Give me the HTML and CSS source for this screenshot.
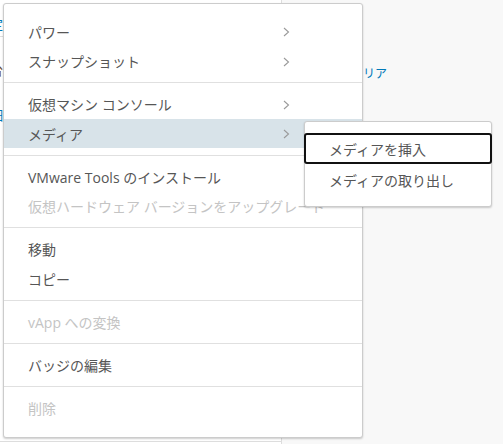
FILE: index.html
```html
<!DOCTYPE html>
<html lang="ja">
<head>
<meta charset="utf-8">
<link rel="stylesheet" href="styles.css">
</head>
<body>
<div class="page">
  <div class="left-panel">
    <div class="frag frag-1">設定</div>
    <div class="frag-line"></div>
    <div class="frag frag-2">台</div>
    <div class="frag frag-3">詳細</div>
    <div class="bottom-row"></div>
  </div>
  <div class="right-panel">
    <div class="link-text">リア</div>
  </div>
</div>

<div class="menu">
  <div class="item"><span class="label">パワー</span><svg class="chev" width="7" height="10" viewBox="0 0 7 10"><polyline points="1,1 5.5,5 1,9" /></svg></div>
  <div class="item"><span class="label">スナップショット</span><svg class="chev" width="7" height="10" viewBox="0 0 7 10"><polyline points="1,1 5.5,5 1,9" /></svg></div>
  <div class="divider"></div>
  <div class="item"><span class="label">仮想マシン コンソール</span><svg class="chev" width="7" height="10" viewBox="0 0 7 10"><polyline points="1,1 5.5,5 1,9" /></svg></div>
  <div class="item active"><span class="label">メディア</span><svg class="chev" width="7" height="10" viewBox="0 0 7 10"><polyline points="1,1 5.5,5 1,9" /></svg></div>
  <div class="divider"></div>
  <div class="item"><span class="label">VMware Tools のインストール</span></div>
  <div class="item disabled"><span class="label">仮想ハードウェア バージョンをアップグレード</span></div>
  <div class="divider"></div>
  <div class="item"><span class="label">移動</span></div>
  <div class="item"><span class="label">コピー</span></div>
  <div class="divider"></div>
  <div class="item disabled"><span class="label">vApp への変換</span></div>
  <div class="divider"></div>
  <div class="item"><span class="label">バッジの編集</span></div>
  <div class="divider"></div>
  <div class="item disabled"><span class="label">削除</span></div>
</div>

<div class="submenu">
  <div class="sub-item focused">メディアを挿入</div>
  <div class="sub-item">メディアの取り出し</div>
</div>
</body>
</html>
```

FILE: styles.css
```css
* { box-sizing: border-box; }

html, body {
  margin: 0;
  padding: 0;
}

body {
  width: 503px;
  height: 444px;
  overflow: hidden;
  background: #f8f8f8;
  font-family: "Open Sans", "Noto Sans CJK JP", sans-serif;
  position: relative;
}

.page {
  display: flex;
  height: 444px;
}

.left-panel {
  width: 282px;
  height: 444px;
  background: #ffffff;
  border-right: 1px solid #dddddd;
  position: relative;
  overflow: hidden;
}

.right-panel {
  flex: 1;
  position: relative;
}

.frag {
  position: absolute;
  right: calc(100% - 3px);
  font-size: 13px;
  white-space: nowrap;
  line-height: 16px;
}

.frag-1 { top: 16px; color: #0079b8; }
.frag-2 { top: 62px; color: #6b4a2b; }
.frag-3 { top: 107px; color: #0079b8; }

.frag-line {
  position: absolute;
  left: 0;
  top: 36px;
  width: 10px;
  height: 1px;
  background: #dddddd;
}

.bottom-row {
  position: absolute;
  left: 0;
  right: 0;
  top: 441px;
  height: 1px;
  background: #dddddd;
}

.link-text {
  position: absolute;
  left: 81px;
  top: 66px;
  font-size: 12px;
  line-height: 16px;
  color: #0079b8;
}

.menu {
  position: absolute;
  left: 3px;
  top: 3px;
  width: 360px;
  height: 435px;
  background: #ffffff;
  border: 1px solid #cccccc;
  border-radius: 3px;
  box-shadow: 0 1px 2px rgba(0, 0, 0, 0.2);
  padding: 12.75px 0 0 0;
}

.item {
  height: 29.5px;
  display: flex;
  align-items: center;
  padding-left: 24px;
  font-size: 14px;
  color: #565656;
  white-space: nowrap;
}

.item .label {
  flex: none;
  width: 255px;
  overflow: visible;
}

.item.disabled {
  color: #c4c4c4;
}

.item.active {
  background: #d8e3e9;
}

.chev {
  display: block;
  margin-top: 1px;
}

.chev polyline {
  fill: none;
  stroke: #9a9a9a;
  stroke-width: 1.1;
}

.divider {
  height: 1px;
  background: #e0e0e0;
  margin: 6.25px 0;
}

.submenu {
  position: absolute;
  left: 304px;
  top: 121px;
  width: 188px;
  height: 86px;
  background: #ffffff;
  border: 1px solid #cccccc;
  border-radius: 3px;
  box-shadow: 0 1px 2px rgba(0, 0, 0, 0.2);
  padding-top: 11px;
}

.sub-item {
  height: 31px;
  display: flex;
  align-items: center;
  padding-left: 23px;
  font-size: 14px;
  color: #565656;
  white-space: nowrap;
  border: 2px solid transparent;
  margin: 0 -1px;
}

.sub-item.focused {
  border-color: #111111;
  border-radius: 3px;
}
```
